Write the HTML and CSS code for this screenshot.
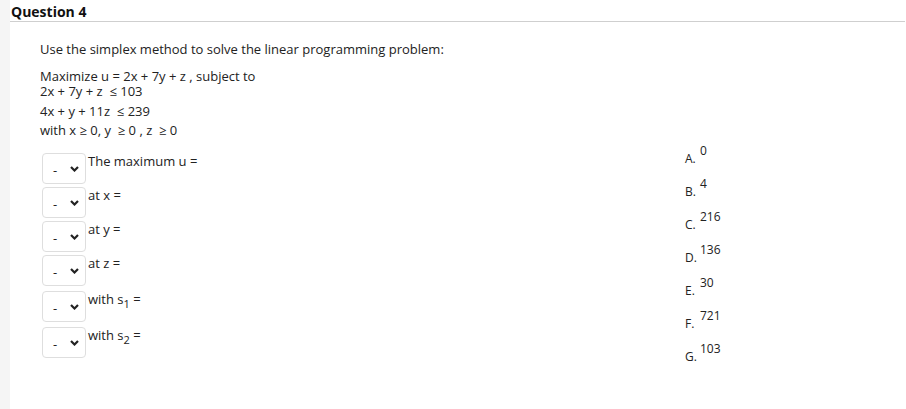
FILE: index.html
```html
<!DOCTYPE html>
<html>
<head>
<meta charset="utf-8">
<link rel="stylesheet" href="styles.css">
</head>
<body>
<div class="page">
  <div class="rail"></div>
  <div class="main">
    <div class="qhead">Question 4</div>
    <div class="content">
      <p class="intro">Use the simplex method to solve the linear programming problem:</p>
      <div class="problem">
        <div class="pl pl1">Maximize u = 2x + 7y + z , subject to</div>
        <div class="pl pl2">2x + 7y + z &nbsp;≤ 103</div>
        <div class="pl pl3">4x + y + 11z &nbsp;≤ 239</div>
        <div class="pl pl4">with x ≥ 0, y &nbsp;≥ 0 , z &nbsp;≥ 0</div>
      </div>
      <div class="answers">
        <div class="rows">
          <div class="row"><div class="sel"><span class="dash">-</span><svg class="chev" width="9" height="6" viewBox="0 0 9 6"><path d="M1 1 L4.5 4.5 L8 1" fill="none" stroke="#222" stroke-width="2.2"/></svg></div><div class="lbl">The maximum u =</div></div>
          <div class="row"><div class="sel"><span class="dash">-</span><svg class="chev" width="9" height="6" viewBox="0 0 9 6"><path d="M1 1 L4.5 4.5 L8 1" fill="none" stroke="#222" stroke-width="2.2"/></svg></div><div class="lbl">at x =</div></div>
          <div class="row"><div class="sel"><span class="dash">-</span><svg class="chev" width="9" height="6" viewBox="0 0 9 6"><path d="M1 1 L4.5 4.5 L8 1" fill="none" stroke="#222" stroke-width="2.2"/></svg></div><div class="lbl">at y =</div></div>
          <div class="row"><div class="sel"><span class="dash">-</span><svg class="chev" width="9" height="6" viewBox="0 0 9 6"><path d="M1 1 L4.5 4.5 L8 1" fill="none" stroke="#222" stroke-width="2.2"/></svg></div><div class="lbl">at z =</div></div>
          <div class="row row-sub"><div class="sel"><span class="dash">-</span><svg class="chev" width="9" height="6" viewBox="0 0 9 6"><path d="M1 1 L4.5 4.5 L8 1" fill="none" stroke="#222" stroke-width="2.2"/></svg></div><div class="lbl">with s<sub>1</sub> =</div></div>
          <div class="row row-sub"><div class="sel"><span class="dash">-</span><svg class="chev" width="9" height="6" viewBox="0 0 9 6"><path d="M1 1 L4.5 4.5 L8 1" fill="none" stroke="#222" stroke-width="2.2"/></svg></div><div class="lbl">with s<sub>2</sub> =</div></div>
        </div>
        <div class="opts">
          <div class="opt"><span class="let">A.</span><span class="val">0</span></div>
          <div class="opt"><span class="let">B.</span><span class="val">4</span></div>
          <div class="opt"><span class="let">C.</span><span class="val">216</span></div>
          <div class="opt"><span class="let">D.</span><span class="val">136</span></div>
          <div class="opt"><span class="let">E.</span><span class="val">30</span></div>
          <div class="opt"><span class="let">F.</span><span class="val">721</span></div>
          <div class="opt"><span class="let">G.</span><span class="val">103</span></div>
        </div>
      </div>
    </div>
  </div>
</div>
</body>
</html>
```
FILE: styles.css
```css
html, body {
  margin: 0;
  padding: 0;
  background: #fff;
}
body {
  font-family: "Open Sans", "Liberation Sans", sans-serif;
  color: #222;
  width: 906px;
  height: 409px;
  overflow: hidden;
}
.page {
  display: flex;
  height: 409px;
}
.rail {
  width: 10px;
  flex: 0 0 10px;
  background: #f5f5f5;
}
.main {
  flex: 0 0 895px;
}
.qhead {
  font-size: 14px;
  font-weight: 700;
  color: #111;
  height: 21px;
  line-height: 24px;
  padding-left: 1px;
  border-bottom: 1px solid #cfcfcf;
  box-sizing: content-box;
}
.content {
  padding-left: 30px;
}
.intro {
  margin: 18px 0 0 0;
  font-size: 13px;
  line-height: 18px;
}
.problem {
  margin-top: 10px;
  font-size: 13px;
  line-height: 18px;
}
.pl1 { line-height: 16px; }
.pl2 { line-height: 15px; }
.pl3 { margin-top: 3px; }
.pl4 { margin-top: 1px; }
.answers {
  display: flex;
  align-items: flex-start;
  margin-top: 4px;
}
.rows {
  width: 645px;
  padding-top: 10px;
  display: flex;
  flex-direction: column;
  gap: 3px;
}
.row {
  display: flex;
  align-items: flex-start;
  margin-left: 2px;
}
.row-sub { margin-top: 2px; }
.sel {
  width: 44px;
  height: 31px;
  box-sizing: border-box;
  border: 1px solid #dedede;
  border-radius: 4px;
  display: flex;
  align-items: center;
}
.dash {
  font-size: 13px;
  margin-left: 10px;
  margin-top: 3px;
}
.chev {
  margin-left: auto;
  margin-right: 6px;
  margin-top: 1px;
}
.lbl {
  font-size: 13px;
  line-height: 18px;
  margin-left: 2px;
  margin-top: -1px;
}
.lbl sub {
  font-size: 11px;
  line-height: 0;
}
.opts {
  display: flex;
  flex-direction: column;
}
.opt {
  height: 33px;
  display: flex;
  align-items: flex-start;
  font-size: 12px;
  line-height: 15px;
  color: #222;
}
.let {
  width: 15px;
  padding-top: 8px;
}
.val {
  padding-top: 0;
}
```
